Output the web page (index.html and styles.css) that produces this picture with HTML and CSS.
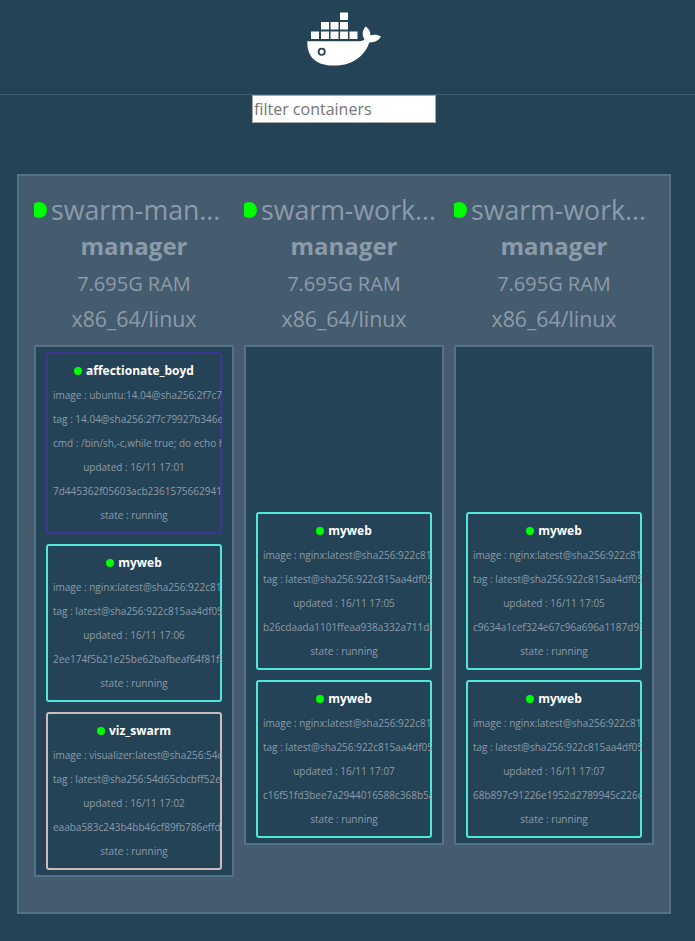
FILE: index.html
```html
<!DOCTYPE html>
<html lang="en">
<head>
<meta charset="utf-8">
<title>Visualizer</title>
<link rel="stylesheet" href="styles.css">
</head>
<body>
<header class="header">
  <svg class="logo" width="76" height="56" viewBox="306 11 76 56" fill="#fff" aria-label="Docker">
    <g>
      <rect x="340" y="12.5" width="8" height="7.5"/>
      <rect x="321" y="22" width="8" height="7.5"/><rect x="330.5" y="22" width="8" height="7.5"/><rect x="340" y="22" width="8" height="7.5"/>
      <rect x="311" y="31.5" width="8" height="7.5"/><rect x="321" y="31.5" width="8" height="7.5"/><rect x="330.5" y="31.5" width="8" height="7.5"/><rect x="340" y="31.5" width="8" height="7.5"/><rect x="349.500" y="31.500" width="8" height="7.500"/>
    </g>
    <path d="M307.300 41.300H357C361 41.300 363.500 40.600 364.600 39.200C361.700 35.500 362.300 30 365.800 26.600C369 29 370.700 32 370.300 35.300C374 34.200 378 34.600 380.900 36.600C379.200 40.500 374.500 42.700 369.300 42.400C364.500 57 351 65.600 334 65.600C315 65.600 307 56.500 307.300 41.300Z"/>
    <circle cx="321.700" cy="51.700" r="3.100" stroke="#254356" stroke-width="1.800"/>
  </svg>
</header>
<div class="filter"><input class="filter-input" type="text" placeholder="filter containers"></div>
<main class="cluster">
  <section class="node">
    <div class="node-name"><i class="node-dot"></i>swarm-man...</div>
    <div class="role">manager</div>
    <div class="ram">7.695G RAM</div>
    <div class="arch">x86_64/linux</div>
    <div class="tasks">
      <article class="task violet"><div class="clip">
        <h3><i class="dot"></i>affectionate_boyd</h3>
        <p>image : ubuntu:14.04@sha256:2f7c79</p><p>tag : 14.04@sha256:2f7c79927b346e4</p><p>cmd : /bin/sh,-c,while true; do echo hello</p><p>updated : 16/11 17:01</p><p>7d445362f05603acb2361575662941</p><p>state : running</p>
      </div></article>
      <article class="task aqua"><div class="clip">
        <h3><i class="dot"></i>myweb</h3>
        <p>image : nginx:latest@sha256:922c815</p><p>tag : latest@sha256:922c815aa4df050</p><p>updated : 16/11 17:06</p><p>2ee174f5b21e25be62bafbeaf64f81f9</p><p>state : running</p>
      </div></article>
      <article class="task rose"><div class="clip">
        <h3><i class="dot"></i>viz_swarm</h3>
        <p>image : visualizer:latest@sha256:54d6</p><p>tag : latest@sha256:54d65cbcbff52ee</p><p>updated : 16/11 17:02</p><p>eaaba583c243b4bb46cf89fb786effdc</p><p>state : running</p>
      </div></article>
    </div>
  </section>
  <section class="node">
    <div class="node-name"><i class="node-dot"></i>swarm-work...</div>
    <div class="role">manager</div>
    <div class="ram">7.695G RAM</div>
    <div class="arch">x86_64/linux</div>
    <div class="tasks lowered">
      <article class="task aqua"><div class="clip">
        <h3><i class="dot"></i>myweb</h3>
        <p>image : nginx:latest@sha256:922c815</p><p>tag : latest@sha256:922c815aa4df050</p><p>updated : 16/11 17:05</p><p>b26cdaada1101ffeaa938a332a711da</p><p>state : running</p>
      </div></article>
      <article class="task aqua"><div class="clip">
        <h3><i class="dot"></i>myweb</h3>
        <p>image : nginx:latest@sha256:922c815</p><p>tag : latest@sha256:922c815aa4df050</p><p>updated : 16/11 17:07</p><p>c16f51fd3bee7a2944016588c368b5a</p><p>state : running</p>
      </div></article>
    </div>
  </section>
  <section class="node">
    <div class="node-name"><i class="node-dot"></i>swarm-work...</div>
    <div class="role">manager</div>
    <div class="ram">7.695G RAM</div>
    <div class="arch">x86_64/linux</div>
    <div class="tasks lowered">
      <article class="task aqua"><div class="clip">
        <h3><i class="dot"></i>myweb</h3>
        <p>image : nginx:latest@sha256:922c815</p><p>tag : latest@sha256:922c815aa4df050</p><p>updated : 16/11 17:05</p><p>c9634a1cef324e67c96a696a1187d93</p><p>state : running</p>
      </div></article>
      <article class="task aqua"><div class="clip">
        <h3><i class="dot"></i>myweb</h3>
        <p>image : nginx:latest@sha256:922c815</p><p>tag : latest@sha256:922c815aa4df050</p><p>updated : 16/11 17:07</p><p>68b897c91226e1952d2789945c226c</p><p>state : running</p>
      </div></article>
    </div>
  </section>
</main>
</body>
</html>
```
FILE: styles.css
```css
* { box-sizing: border-box; }
body {
  margin: 0;
  height: 941px;
  overflow: hidden;
  background: #254356;
  color: #8c9ba9;
  font-family: "Open Sans", sans-serif;
}
.header {
  height: 95px;
  padding: 11px 0 0 306px;
  border-bottom: 1px solid #3e5d70;
}
.logo { display: block; }
.filter { padding-left: 252px; height: 79px; }
.filter-input {
  display: block;
  width: 184px;
  height: 28px;
  padding: 1px;
  border: 1px solid #a9a9a9;
  background: #fff;
  font: 16px "Open Sans", sans-serif;
}
.filter-input::placeholder { color: #757575; }
.cluster {
  display: flex;
  align-items: flex-start;
  gap: 10px;
  width: 654px;
  height: 740px;
  margin-left: 17px;
  padding: 15px;
  border: 2px solid #547388;
  background: #455b6e;
}
.node { width: 200px; text-align: center; white-space: nowrap; }
.node-name {
  display: flex;
  align-items: center;
  height: 38px;
  overflow: hidden;
  font-size: 26.7px;
  line-height: 38px;
}
.node-dot {
  flex: none;
  width: 16px;
  height: 16px;
  margin: 0 4px 0 -3px;
  border-radius: 50%;
  background: #0f0;
}
.role { height: 36px; font-size: 24px; line-height: 34px; font-weight: 700; }
.ram { height: 37px; font-size: 20px; line-height: 37px; }
.arch { height: 43px; font-size: 21.3px; line-height: 33px; }
.tasks {
  display: flex;
  flex-direction: column;
  gap: 10px;
  padding: 5px 10px;
  border: 2px solid #547388;
  background: #254356;
}
.lowered { padding-top: 165px; }
.task { width: 176px; border: 2px solid; border-radius: 3px; }
.violet { border-color: #3d3594; }
.aqua { border-color: #50e8d8; }
.rose { border-color: #cbbcc0; }
.clip { margin-right: -2px; padding: 5px 7px 5px 5px; overflow: hidden; }
.task h3 {
  display: flex;
  justify-content: center;
  align-items: center;
  margin: 0;
  height: 24px;
  color: #fff;
  font-size: 12px;
  line-height: 24px;
}
.dot { width: 8px; height: 8px; margin-right: 4px; border-radius: 50%; background: #0f0; }
.task p { margin: 0; height: 24px; font-size: 10px; line-height: 24px; }
```
